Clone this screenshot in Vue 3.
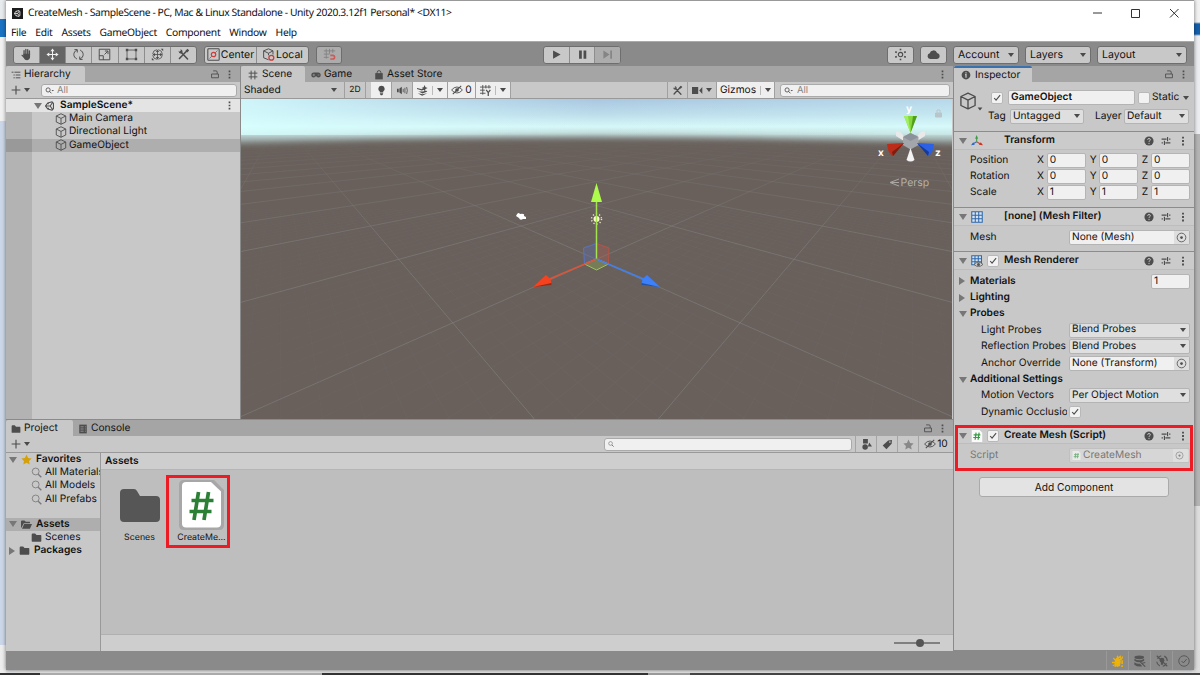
<template>
  <div class="desktop">
    <!-- shared icon shapes -->
    <svg class="defs">
      <symbol id="i-hand" viewBox="0 0 16 16"><path d="M5 9V3.2M7.2 8V1.8M9.5 8V2M11.6 9V3.6" stroke="currentColor" stroke-width="1.6" stroke-linecap="round" /><path d="M4.2 7h8.2v3.5c0 2.500-1.200 4.500-3.600 4.500-2.200 0-3-.8-4.100-2.700L1.600 8.800c.6-1 1.700-.7 2.600.6z" fill="currentColor" /></symbol>
      <symbol id="i-move" viewBox="0 0 16 16"><path d="M8 3v10M3 8h10" stroke="currentColor" stroke-width="1.300" /><path d="M8 .5l2.500 3.500h-5zM8 15.500l2.500-3.500h-5zM.5 8L4 5.500v5zM15.500 8L12 5.500v5z" fill="currentColor" /></symbol>
      <symbol id="i-rotate" viewBox="0 0 16 16"><g fill="none" stroke="currentColor" stroke-width="1.200"><path d="M6 13.500C1 11 1 5 6 2.500M3 2h3.500v3.500M10 2.500c5 2.500 5 8.500 0 11M13 14H9.500v-3.500" /></g></symbol>
      <symbol id="i-scale" viewBox="0 0 16 16"><g fill="none" stroke="currentColor" stroke-width="1.200"><path d="M1.500 1.500h13v13h-13zM1.500 9.500h5v5M8 8l4-4M8.500 3.700h3.800v3.800" /></g></symbol>
      <symbol id="i-rect" viewBox="0 0 16 16"><path d="M2.500 2.500h11v11h-11z" fill="none" stroke="currentColor" /><path d="M1 1h3v3H1zM12 1h3v3h-3zM1 12h3v3H1zM12 12h3v3h-3z" fill="currentColor" /></symbol>
      <symbol id="i-trs" viewBox="0 0 16 16"><circle cx="8" cy="8" r="6" fill="none" stroke="currentColor" stroke-dasharray="8 1.500" /><path d="M8 3v10M3 8h10" stroke="currentColor" /><path d="M8 2l2 3H6zM8 14l2-3H6zM2 8l3-2v4zM14 8l-3-2v4zM12 1h3v3zM1 12v3h3z" fill="currentColor" /></symbol>
      <symbol id="i-tools" viewBox="0 0 16 16"><path d="M4.500 4.500l8.500 9M12.500 3L3 13" stroke="currentColor" stroke-width="1.900" stroke-linecap="round" /><path d="M2 3.500c0 3 2 4 4.500 2.500C7.500 3.500 6 1.500 4 1.800L5 4 3.800 4.800zM10.500 3.500L13 1l2 2-2.500 2.500z" fill="currentColor" /></symbol>
      <symbol id="i-center" viewBox="0 0 16 16"><rect x="1" y="1" width="14" height="14" rx="1" fill="none" stroke="currentColor" stroke-width="1.300" /><circle cx="8" cy="8" r="2.700" fill="none" stroke="#cc3d3d" stroke-width="1.500" /><path d="M10 6l3-3M6 10l-3 3" stroke="#cc3d3d" /></symbol>
      <symbol id="i-cube" viewBox="0 0 16 16"><path d="M8 1l6.300 3v8L8 15 1.700 12V4zM1.700 4L8 7.200 14.300 4M8 7.200V15" fill="none" stroke="currentColor" stroke-width="1.200" stroke-linejoin="round" /></symbol>
      <symbol id="i-local" viewBox="0 0 16 16"><path d="M8 1l5.500 2.500V8M8 14.500L2 12V3.500L8 1M2 3.500L8 6.500l5.500-3M8 6.500V9" fill="none" stroke="currentColor" stroke-width="1.200" /><circle cx="11.500" cy="12" r="3" fill="none" stroke="#cc3d3d" stroke-width="1.600" /></symbol>
      <symbol id="i-snap" viewBox="0 0 16 16"><path d="M4 1v12M8 1v6M12 1v5M1 3.500h14M1 7.500h7M1 11.500h6" stroke="currentColor" stroke-width="1.200" /><path d="M9 9h3a2 2 0 010 4.500H9" fill="none" stroke="#cc5b5b" stroke-width="2" /></symbol>
      <symbol id="i-play" viewBox="0 0 16 16"><path d="M3 2l11 6-11 6z" fill="currentColor" /></symbol>
      <symbol id="i-pause" viewBox="0 0 16 16"><path d="M3 2h4v12H3zM9.500 2h4v12h-4z" fill="currentColor" /></symbol>
      <symbol id="i-step" viewBox="0 0 16 16"><path d="M2 2l9 6-9 6zM12 2h2.500v12H12z" fill="currentColor" /></symbol>
      <symbol id="i-collab" viewBox="0 0 16 16"><circle cx="8" cy="8" r="2.700" fill="none" stroke="currentColor" stroke-width="1.400" /><path d="M8 .8v2M8 13.200v2M1.500 4.500l2 1M14.500 4.500l-2 1M1.500 11.500l2-1M14.500 11.500l-2-1" stroke="currentColor" stroke-width="2" /></symbol>
      <symbol id="i-cloud" viewBox="0 0 16 16"><path d="M4 13.500a3.500 3.500 0 01-.6-6.900 4.700 4.700 0 019-.6A3.800 3.800 0 0112.500 13.500z" fill="currentColor" /></symbol>
      <symbol id="i-hier" viewBox="0 0 16 16"><path d="M1 3.500h3M5.500 3.500H15M4 8h2M7.500 8H15M4 12.500h2M7.500 12.500H15" stroke="currentColor" stroke-width="1.500" /></symbol>
      <symbol id="i-lock" viewBox="0 0 16 16"><path d="M2.500 8h11v6h-11zM5 3h4.500q2 0 2 2v3" fill="none" stroke="currentColor" stroke-width="1.400" /></symbol>
      <symbol id="i-dots" viewBox="0 0 16 16"><path d="M6.500 1h3v3h-3zM6.500 6.500h3v3h-3zM6.500 12h3v3h-3z" fill="currentColor" /></symbol>
      <symbol id="i-plus" viewBox="0 0 16 16"><path d="M8 1v14M1 8h14" stroke="currentColor" stroke-width="1.800" /></symbol>
      <symbol id="i-find" viewBox="0 0 16 16"><circle cx="5.500" cy="7" r="3.700" fill="none" stroke="currentColor" stroke-width="1.500" /><path d="M8 9.500l3.500 3.500" stroke="currentColor" stroke-width="1.600" /><path d="M11.500 7H16l-2.200 2.500z" fill="currentColor" /></symbol>
      <symbol id="i-lens" viewBox="0 0 16 16"><circle cx="6.800" cy="6.500" r="5" fill="none" stroke="currentColor" stroke-width="1.200" /><path d="M10.500 10.500l4.500 4.500" stroke="currentColor" stroke-width="1.900" /></symbol>
      <symbol id="i-unity" viewBox="0 0 16 16"><path d="M11.500 1.200L4.500 3 .8 8l3.700 5 7 1.800M11.500 1.200L13.500 4v8l-2 2.800M.8 8h7.500M8.300 8l4-6M8.300 8l4 6M4.500 3l1.300 2M4.500 13l1.300-2" fill="none" stroke="currentColor" stroke-width="1.700" /></symbol>
      <symbol id="i-hash" viewBox="0 0 16 16"><path d="M5 1v14M11 1v14M1 5h14M1 11h14" stroke="currentColor" stroke-width="1.500" /></symbol>
      <symbol id="i-pad" viewBox="0 0 16 16"><path d="M4.500 4h7a4 4 0 010 8q-1.500 0-2-1.500h-3Q6 12 4.500 12a4 4 0 010-8z" fill="currentColor" /><path d="M4.500 6v4M2.500 8h4M10.500 8h3" stroke="#a5a5a5" /></symbol>
      <symbol id="i-bag" viewBox="0 0 16 16"><path d="M2 5h12v10H2z" fill="currentColor" /><path d="M5 6V4a3 3 0 016 0v2" fill="none" stroke="currentColor" stroke-width="1.500" /></symbol>
      <symbol id="i-bulb" viewBox="0 0 16 16"><path d="M8 1a4.600 4.600 0 00-2.500 8.500V11h5V9.500A4.600 4.600 0 008 1zM5.700 12h4.600v1L9 15H7l-1.300-2z" fill="currentColor" /></symbol>
      <symbol id="i-audio" viewBox="0 0 16 16"><path d="M0 5.500h2.500v5H0zM3.500 5L7 2.500v11L3.500 11z" fill="currentColor" /><path d="M9 5.500v5M11.500 4v8M14 3q2 5 0 10" stroke="currentColor" stroke-width="1.200" fill="none" /></symbol>
      <symbol id="i-fx" viewBox="0 0 16 16"><path d="M0 8l3 1.500h6L13 8l2 1.500-7 3zM1 12l6.500 3.500L15 12l-7 1.500z" fill="currentColor" /><path d="M0 5l7 2 3-1" stroke="currentColor" stroke-width="1.600" fill="none" /><path d="M11 0l1.400 3.100L15.500 4.500l-3.100 1.400L11 9 9.600 5.900 6.500 4.500l3.100-1.400z" fill="currentColor" /></symbol>
      <symbol id="i-eyeoff" viewBox="0 0 20 16"><path d="M1 8q4-5 9-5t9 5q-4 5-9 5T1 8z" fill="none" stroke="currentColor" stroke-width="1.500" /><circle cx="10" cy="8" r="3" fill="currentColor" /><path d="M3 15L17 1" stroke="currentColor" stroke-width="1.700" /></symbol>
      <symbol id="i-grid" viewBox="0 0 16 16"><path d="M4 0v14M8.500 0v5M13 0v5M0 3h16M0 7.500h7M0 12h8" stroke="currentColor" stroke-width="1.300" /><path d="M9 7l3 4 3-4M12 11v5" fill="none" stroke="currentColor" stroke-width="1.800" /></symbol>
      <symbol id="i-cam" viewBox="0 0 16 16"><path d="M0 3h9v10H0zM10.500 8L15 3v10z" fill="currentColor" /></symbol>
      <symbol id="i-info" viewBox="0 0 16 16"><circle cx="8" cy="8" r="7" fill="currentColor" /><path d="M8 3.500v2M6.500 7.500H8v5" stroke="#c8c8c8" stroke-width="2" fill="none" /></symbol>
      <symbol id="i-help" viewBox="0 0 16 16"><circle cx="8" cy="8" r="7.300" fill="currentColor" /><path d="M5.800 6q0-2 2.200-2t2.200 2q0 1-1.200 1.700T8 9.500M8 11v2" stroke="#cbcbcb" stroke-width="1.500" fill="none" /></symbol>
      <symbol id="i-preset" viewBox="0 0 16 16"><path d="M1 5h8M13 5h2M1 11h2M7 11h8M10.500 1.500v7M5.500 7.500v7" stroke="currentColor" stroke-width="1.800" /></symbol>
      <symbol id="i-axes" viewBox="0 0 16 16"><path d="M7.500 9V4" stroke="#4a9b52" stroke-width="1.500" /><path d="M5.500 5l2-5 2 5z" fill="#3b9b45" /><path d="M7.500 9l-5 3" stroke="#3770c8" stroke-width="1.500" /><path d="M0 13.500l3-4 2 3.500z" fill="#2a67c5" /><path d="M7.500 9l5 3" stroke="#c84b3c" stroke-width="1.500" /><path d="M16 13.500l-3-4-2.500 3.500z" fill="#d62d1e" /></symbol>
      <symbol id="i-mesh" viewBox="0 0 16 16"><path d="M1 1h14v14H1zM5.700 1v14M10.300 1v14M1 5.700h14M1 10.300h14" fill="#dbe4ee" stroke="#2c68ad" stroke-width="1.400" /></symbol>
      <symbol id="i-renderer" viewBox="0 0 16 16"><path d="M1 1h13v12H1zM5.300 1v12M9.700 1v12M1 5h13M1 9h13" fill="#dbe4ee" stroke="#2c68ad" stroke-width="1.400" /><path d="M4 12.500q6-6 12 0-6 6-12 0z" fill="#c8c8c8" stroke="#555" /><circle cx="10" cy="12.500" r="2" fill="#555" /></symbol>
      <symbol id="i-folder" viewBox="0 0 16 16"><path d="M1 3.500Q1 2 2.500 2H6l2 2.500h6q1 0 1 1v7.500q0 1-1 1H2q-1 0-1-1z" fill="currentColor" /></symbol>
      <symbol id="i-open" viewBox="0 0 16 16"><path d="M0 13V3.500Q0 2 1.500 2H5l2 2h6v2H4L1 12z" fill="currentColor" /><path d="M4.500 7.200H16L13 14H1.500z" fill="currentColor" /></symbol>
      <symbol id="i-console" viewBox="0 0 16 16"><path d="M2 1h12v14H2z" fill="currentColor" /><path d="M4 4.500h5M11 4.500h1.500M4 8h5M11 8h1.500M4 11.500h5M11 11.500h1.500" stroke="#a5a5a5" stroke-width="1.200" /></symbol>
      <symbol id="i-star" viewBox="0 0 16 16"><path d="M8 .8l2.300 4.900 5.200.7-3.800 3.700.9 5.300L8 12.800l-4.600 2.600.9-5.300L.5 6.400l5.200-.7z" fill="currentColor" /></symbol>
      <symbol id="i-shapes" viewBox="0 0 16 16"><path d="M3 0h7v6.500H3zM12 5l4 6h-6z" fill="currentColor" /><circle cx="6" cy="11.500" r="4" fill="currentColor" /></symbol>
      <symbol id="i-tag" viewBox="0 0 16 16"><path d="M1 9.500L9 2l5.500-.5L14 7l-7.500 8z" fill="currentColor" /><circle cx="11.500" cy="4.500" r="1.200" fill="#c8c8c8" /></symbol>
      <symbol id="i-bug" viewBox="0 0 16 16"><path d="M5 6l2-2 3 2 1 3-1 5-3 1-3-3z" fill="currentColor" stroke="currentColor" stroke-width="1.500" /><path d="M7 1l1 3 3-2v3M2 4l2 3M0 10h4M1 14l3-1M5 13l-1 3M14 2l-1 3-3 2" stroke="currentColor" stroke-width="1.700" fill="none" /><path d="M13.500 7v5M13.500 13.500V16" stroke="currentColor" stroke-width="2" /></symbol>
      <symbol id="i-stack" viewBox="0 0 16 16"><ellipse cx="7" cy="3" rx="6.500" ry="2.500" fill="currentColor" /><path d="M.5 5q6.500 4 13 0v2.500q-6.500 4-13 0zM.5 9.500Q4 12 8 11.500l3 3.500q-6 1.500-10.500-2z" fill="currentColor" /><path d="M8.500 9.500l6.500 6M15 10l-4 1" stroke="currentColor" stroke-width="1.600" /></symbol>
      <symbol id="i-nolight" viewBox="0 0 16 16"><path d="M2 5a7 7 0 015-4M11 1.500A7 7 0 0115 8M14 11a7 7 0 01-5 4M5 14.500A7 7 0 011 9" fill="none" stroke="currentColor" stroke-width="1.500" /><circle cx="8" cy="7" r="3.200" fill="currentColor" /><path d="M6.500 9h3v4h-3z" fill="currentColor" /><path d="M1 1l14 14" stroke="currentColor" stroke-width="1.500" /></symbol>
      <symbol id="i-ok" viewBox="0 0 16 16"><circle cx="8" cy="8" r="7" fill="none" stroke="currentColor" stroke-width="1.200" /><path d="M4.800 8l2.400 2.500L11.500 5.500" fill="none" stroke="currentColor" stroke-width="1.300" /></symbol>
      <symbol id="i-target" viewBox="0 0 16 16"><circle cx="8" cy="8" r="6.300" fill="none" stroke="currentColor" stroke-width="1.200" /><circle cx="8" cy="8" r="2" fill="currentColor" /></symbol>
      <symbol id="i-check" viewBox="0 0 16 16"><path d="M3.500 8l3 3.500 6.500-8" fill="none" stroke="currentColor" stroke-width="1.800" /></symbol>
      <symbol id="i-script" viewBox="0 0 16 16"><path d="M1 0h10.500L15 3.500V16H1z" fill="#fafafa" /><path d="M6.800 3.500L5.500 13M10.800 3.500L9.500 13M3.500 6.500h9M3 10h9" stroke="#379944" stroke-width="1.600" /></symbol>
    </svg>

    <!-- windows behind the editor -->
    <div class="behind-left"></div>
    <div class="behind-right"></div>

    <div class="window">
      <div class="titlebar">
        <span class="app-logo"><svg class="icon"><use href="#i-unity" /></svg></span>
        <span class="title">CreateMesh - SampleScene - PC, Mac &amp; Linux Standalone - Unity 2020.3.12f1 Personal* &lt;DX11&gt;</span>
        <svg class="win-btns" viewBox="0 0 90 12">
          <path d="M1 6h9M39.500 2.500h8v8h-8zM78 2l8.500 8.500M86.500 2L78 10.500" fill="none" stroke="#333" />
        </svg>
      </div>
      <nav class="menubar">
        <span v-for="m in menus" :key="m">{{ m }}</span>
      </nav>

      <!-- main toolbar -->
      <div class="toolbar">
        <div class="btn-group tools">
          <span v-for="t in tools" :key="t" class="btn" :class="{ active: t === 'move' }">
            <svg class="icon"><use :href="'#i-' + t" /></svg>
          </span>
        </div>
        <div class="btn-group pivot">
          <span class="btn"><svg class="icon"><use href="#i-center" /></svg>Center</span>
          <span class="btn"><svg class="icon"><use href="#i-local" /></svg>Local</span>
        </div>
        <div class="btn-group snap"><span class="btn dim"><svg class="icon"><use href="#i-snap" /></svg></span></div>
        <div class="btn-group playback">
          <span class="btn"><svg class="icon"><use href="#i-play" /></svg></span>
          <span class="btn"><svg class="icon"><use href="#i-pause" /></svg></span>
          <span class="btn dim"><svg class="icon"><use href="#i-step" /></svg></span>
        </div>
        <div class="btn-group collab"><span class="btn"><svg class="icon"><use href="#i-collab" /></svg></span></div>
        <div class="btn-group cloud"><span class="btn"><svg class="icon"><use href="#i-cloud" /></svg></span></div>
        <div class="btn-group drop">Account<i class="caret"></i></div>
        <div class="btn-group drop">Layers<i class="caret"></i></div>
        <div class="btn-group drop wide">Layout<i class="caret"></i></div>
      </div>

      <div class="main">
        <div class="left">
          <div class="upper">
            <!-- hierarchy -->
            <section class="panel hierarchy">
              <div class="tabs">
                <span class="tab on"><svg class="icon"><use href="#i-hier" /></svg>Hierarchy</span>
                <svg class="icon lock"><use href="#i-lock" /></svg>
                <svg class="icon dots"><use href="#i-dots" /></svg>
              </div>
              <div class="bar">
                <svg class="icon plus"><use href="#i-plus" /></svg><i class="caret"></i>
                <div class="search"><svg class="icon"><use href="#i-find" /></svg>All</div>
              </div>
              <div class="tree">
                <div class="node scene-node">
                  <i class="fold"></i><svg class="icon"><use href="#i-unity" /></svg><b>SampleScene*</b>
                  <svg class="icon dots"><use href="#i-dots" /></svg>
                </div>
                <div v-for="o in objects" :key="o" class="node" :class="{ picked: o === 'GameObject' }">
                  <svg class="icon"><use href="#i-cube" /></svg>{{ o }}
                </div>
              </div>
            </section>

            <!-- scene view -->
            <section class="panel scene">
              <div class="tabs">
                <span class="tab on scene-tab"><svg class="icon"><use href="#i-hash" /></svg>Scene</span>
                <span class="tab game-tab"><svg class="icon"><use href="#i-pad" /></svg>Game</span>
                <span class="tab"><svg class="icon"><use href="#i-bag" /></svg>Asset Store</span>
                <svg class="icon dots"><use href="#i-dots" /></svg>
              </div>
              <div class="bar scene-bar">
                <span class="shade">Shaded<i class="caret"></i></span>
                <span class="cell two-d">2D</span>
                <span class="cell lit bulb"><svg class="icon"><use href="#i-bulb" /></svg></span>
                <span class="cell audio"><svg class="icon"><use href="#i-audio" /></svg></span>
                <span class="cell lit fx"><svg class="icon"><use href="#i-fx" /></svg><i class="sep"></i><i class="caret"></i></span>
                <span class="cell lit hidden"><svg class="icon eye"><use href="#i-eyeoff" /></svg>0</span>
                <span class="cell lit gridcell"><svg class="icon"><use href="#i-grid" /></svg><i class="sep"></i><i class="caret"></i></span>
                <span class="cell wrench"><svg class="icon"><use href="#i-tools" /></svg></span>
                <span class="cell camera"><svg class="icon"><use href="#i-cam" /></svg><i class="caret"></i></span>
                <span class="cell lit gizmos">Gizmos<i class="sep"></i><i class="caret"></i></span>
                <div class="search"><svg class="icon"><use href="#i-find" /></svg>All</div>
              </div>
              <svg class="viewport" width="711" height="320" viewBox="1 0 711 320">
                <defs>
                  <linearGradient id="sky" x1="0" y1="0" x2="0" y2="1">
                    <stop offset="0" stop-color="#a9c7e1" />
                    <stop offset=".25" stop-color="#bcdcea" />
                    <stop offset=".46" stop-color="#d6f7f8" />
                    <stop offset=".58" stop-color="#c3dedd" />
                    <stop offset=".72" stop-color="#939d9b" />
                    <stop offset=".86" stop-color="#69615c" />
                  </linearGradient>
                  <linearGradient id="glow" x1="0" y1="0" x2="1" y2="0">
                    <stop offset="0" stop-color="#d8ffff" stop-opacity=".8" />
                    <stop offset=".5" stop-color="#d8ffff" stop-opacity="0" />
                    <stop offset="1" stop-color="#d8ffff" stop-opacity=".3" />
                  </linearGradient>
                  <linearGradient id="fade" gradientUnits="userSpaceOnUse" x1="0" y1="42" x2="0" y2="150">
                    <stop offset="0" stop-color="#fff" stop-opacity="0" />
                    <stop offset=".3" stop-color="#fff" stop-opacity=".4" />
                    <stop offset="1" stop-color="#fff" />
                  </linearGradient>
                  <radialGradient id="near" gradientUnits="userSpaceOnUse" cx="356" cy="330" r="360">
                    <stop offset="0" stop-color="#fff" />
                    <stop offset="1" stop-color="#fff" stop-opacity=".4" />
                  </radialGradient>
                  <filter id="soft" x="-10%" y="-10%" width="120%" height="120%"><feGaussianBlur stdDeviation="3.500" /></filter>
                  <mask id="far-mask"><rect width="712" height="320" fill="url(#fade)" /></mask>
                  <mask id="near-mask"><rect y="100" width="712" height="220" fill="url(#near)" /></mask>
                </defs>
                <rect width="712" height="60" fill="url(#sky)" />
                <rect width="712" height="36" fill="url(#glow)" />
                <path d="M-40 48Q356 30 750 48V400H-40z" fill="#69615c" filter="url(#soft)" />
                <g mask="url(#near-mask)"><path :d="minorGrid" class="minor" /></g>
                <g mask="url(#far-mask)"><path :d="majorGrid" class="major" /></g>

                <!-- camera and light gizmos -->
                <path d="M276 117q2-5 4-2 5-1 4 2l2 1v2h-3q-3 2-4-1z" fill="#fff" />
                <circle cx="356.500" cy="120" r="5" fill="none" stroke="#e8e3c4" stroke-width="1.500" stroke-dasharray="1.200 2" />
                <circle cx="356.500" cy="120" r="3" fill="#fdf7cc" />

                <!-- move handle -->
                <path d="M343.500 149l13-4.500v15.500l-12 5z" fill="#5c6fb3" fill-opacity=".35" stroke="#5674c4" />
                <path d="M356.500 144.500l12.500 4.500-.5 16-12-5z" fill="#b35c52" fill-opacity=".35" stroke="#b95344" />
                <path d="M344.500 165l12-5 12 5-12 6z" fill="#89a852" fill-opacity=".4" stroke="#9bc256" />
                <path d="M356.500 160V100" stroke="#a4e34f" stroke-width="1.500" />
                <path d="M356.500 84l5.500 19h-11z" fill="#adfb4a" />
                <path d="M356.500 160l-47 20" stroke="#d9563c" stroke-width="1.500" />
                <path d="M293 188l13-12 4.500 4 1 6z" fill="#f8421f" />
                <path d="M293 188l18.500-4v2z" fill="#8d2c1c" />
                <path d="M356.500 160l47 20" stroke="#4480ea" stroke-width="1.500" />
                <path d="M420 188l-13-12-4.500 4-1 6z" fill="#3d80fb" />
                <path d="M420 188l-18.500-4v2z" fill="#24509c" />

                <!-- orientation gizmo -->
                <g>
                  <path d="M656 33q3-2 6 2l6 6-4 1-8-5zM685 33q-3-2-6 2l-6 6 4 1 8-5z" fill="#e9e9e9" />
                  <path d="M663 38l7.500-4 8 4v8l-8 4.500-7.500-4.500z" fill="#a3a7ac" />
                  <path d="M663 38l7.500-4 8 4-8 4z" fill="#8b9299" />
                  <path d="M664 17h13l-6.500 17z" fill="#84d83b" /><path d="M664 17h4l2.500 17z" fill="#a4ef61" /><path d="M673 17h4l-6.500 17z" fill="#519d1e" />
                  <path d="M647 45l17-1-11 13q-5-2-6-12z" fill="#bd2c18" /><path d="M664 44l-11 13-1-4z" fill="#7e1d10" />
                  <path d="M694 45l-17-1 11 13q5-2 6-12z" fill="#2c61e4" /><path d="M677 44l11 13 1-4z" fill="#163a99" />
                  <path d="M670.500 49l4 12q-4 3-8 0z" fill="#f3f3f3" />
                </g>
                <g class="gizmo-text">
                  <text x="666" y="13">y</text><text x="638" y="57">x</text><text x="695" y="57">z</text>
                </g>
                <g stroke="#b9c6c9" fill="none"><path d="M695.500 14h6v4h-6z" fill="#b9c6c9" /><path d="M697 14v-3h3v3" /></g>
                <path d="M659 80l-9 3.500 9 3.500M659 83.500h-8" fill="none" stroke="#aaa7a3" />
                <text x="660.500" y="87" class="persp">Persp</text>
              </svg>
            </section>
          </div>

          <!-- project -->
          <section class="panel project">
            <div class="tabs">
              <span class="tab on project-tab"><svg class="icon"><use href="#i-folder" /></svg>Project</span>
              <span class="tab"><svg class="icon"><use href="#i-console" /></svg>Console</span>
              <svg class="icon lock"><use href="#i-lock" /></svg>
              <svg class="icon dots"><use href="#i-dots" /></svg>
            </div>
            <div class="bar project-bar">
              <svg class="icon plus"><use href="#i-plus" /></svg><i class="caret"></i>
              <div class="search"><svg class="icon"><use href="#i-lens" /></svg></div>
              <span class="cell"><svg class="icon"><use href="#i-shapes" /></svg></span>
              <span class="cell"><svg class="icon"><use href="#i-tag" /></svg></span>
              <span class="cell fav"><svg class="icon"><use href="#i-star" /></svg></span>
              <span class="cell count"><svg class="icon eye"><use href="#i-eyeoff" /></svg>10</span>
            </div>
            <div class="browser">
              <div class="folders">
                <div class="node root"><i class="fold"></i><svg class="icon gold"><use href="#i-star" /></svg><b>Favorites</b></div>
                <div v-for="f in filters" :key="f" class="node child"><svg class="icon lens"><use href="#i-lens" /></svg>{{ f }}</div>
                <div class="node root picked"><i class="fold"></i><svg class="icon"><use href="#i-open" /></svg><b>Assets</b></div>
                <div class="node child"><svg class="icon"><use href="#i-folder" /></svg>Scenes</div>
                <div class="node root"><i class="fold closed"></i><svg class="icon"><use href="#i-folder" /></svg><b>Packages</b></div>
              </div>
              <div class="files">
                <div class="crumb">Assets</div>
                <div class="tiles">
                  <div class="tile">
                    <svg class="thumb" viewBox="0 0 50 50"><path d="M5 13q0-4 4-4h10q2 0 3 2l3 5h16q4 0 4 4v18q0 4-4 4H9q-4 0-4-4z" fill="#565656" /></svg>
                    <span>Scenes</span>
                  </div>
                  <div class="tile marked">
                    <svg class="thumb" viewBox="0 0 50 50">
                      <path d="M7 0h30l10 10v35q0 5-5 5H7q-5 0-5-5V5q0-5 5-5z" fill="#a7a7a7" />
                      <path d="M9 2h25l10 9.500v32q0 4-4 4H9q-4 0-4-4V6q0-4 4-4z" fill="#fff" />
                      <path d="M21.500 12l-4.500 28M31.500 12L27 40M14.500 20.500h22M12.500 31.500h22" stroke="#2c8036" stroke-width="3.700" />
                    </svg>
                    <span>CreateMe...</span>
                  </div>
                </div>
                <div class="zoombar"><i class="track"><i class="knob"></i></i></div>
              </div>
            </div>
          </section>
        </div>

        <!-- inspector -->
        <section class="panel inspector">
          <div class="tabs">
            <span class="tab on focus"><svg class="icon"><use href="#i-info" /></svg>Inspector</span>
            <svg class="icon lock"><use href="#i-lock" /></svg>
            <svg class="icon dots"><use href="#i-dots" /></svg>
          </div>
          <div class="object-head">
            <div class="big-cube"><svg class="icon"><use href="#i-cube" /></svg><i class="caret"></i></div>
            <div class="head-rows">
              <div class="head-row">
                <span class="box"><svg class="icon"><use href="#i-check" /></svg></span>
                <span class="field name">GameObject</span>
                <span class="box empty"></span>
                <span class="static">Static</span><i class="caret"></i>
              </div>
              <div class="head-row second">
                <span class="tag">Tag</span><span class="select tag-sel">Untagged<i class="caret"></i></span>
                <span class="layer">Layer</span><span class="select layer-sel">Default<i class="caret"></i></span>
              </div>
            </div>
          </div>

          <div v-for="c in components" :key="c.title" class="component" :class="c.cls">
            <header>
              <i class="fold"></i>
              <svg class="icon type"><use :href="'#i-' + c.icon" /></svg>
              <span class="box" :class="{ none: !c.toggle }"><svg class="icon"><use href="#i-check" /></svg></span>
              <b>{{ c.title }}</b>
              <svg class="icon"><use href="#i-help" /></svg>
              <svg class="icon"><use href="#i-preset" /></svg>
              <svg class="icon dots"><use href="#i-dots" /></svg>
            </header>
            <div v-for="r in c.rows" :key="r.label" class="row" :class="['row-' + r.kind, { sub: r.sub }]">
              <i v-if="r.kind === 'group'" class="fold" :class="{ closed: !r.open }"></i>
              <span class="label">{{ r.label }}</span>
              <template v-if="r.kind === 'vector'">
                <span v-for="(v, i) in r.value" :key="i" class="axis">{{ 'XYZ'[i] }}<span class="field">{{ v }}</span></span>
              </template>
              <span v-else-if="r.kind === 'select'" class="select">{{ r.value }}<i class="caret"></i></span>
              <span v-else-if="r.kind === 'object'" class="field ref">
                <svg v-if="r.icon" class="icon"><use href="#i-script" /></svg>{{ r.value }}
                <em><svg class="icon"><use href="#i-target" /></svg></em>
              </span>
              <span v-else-if="r.kind === 'check'" class="box"><svg class="icon"><use href="#i-check" /></svg></span>
              <span v-else-if="r.value" class="field size">{{ r.value }}</span>
            </div>
          </div>
          <button class="add">Add Component</button>
        </section>
      </div>

      <footer class="status">
        <span class="warn"><svg class="icon"><use href="#i-bug" /></svg></span>
        <span><svg class="icon"><use href="#i-stack" /></svg></span>
        <span><svg class="icon"><use href="#i-nolight" /></svg></span>
        <span><svg class="icon"><use href="#i-ok" /></svg></span>
      </footer>
    </div>
    <div class="taskbar"></div>
  </div>
</template>

<script setup>
const menus = ['File', 'Edit', 'Assets', 'GameObject', 'Component', 'Window', 'Help']
const tools = ['hand', 'move', 'rotate', 'scale', 'rect', 'trs', 'tools']
const objects = ['Main Camera', 'Directional Light', 'GameObject']
const filters = ['All Materials', 'All Models', 'All Prefabs']

const components = [
  {
    title: 'Transform', icon: 'axes', cls: 'transform',
    rows: [
      { label: 'Position', kind: 'vector', value: [0, 0, 0] },
      { label: 'Rotation', kind: 'vector', value: [0, 0, 0] },
      { label: 'Scale', kind: 'vector', value: [1, 1, 1] },
    ],
  },
  {
    title: '[none] (Mesh Filter)', icon: 'mesh', cls: 'filter',
    rows: [{ label: 'Mesh', kind: 'object', value: 'None (Mesh)' }],
  },
  {
    title: 'Mesh Renderer', icon: 'renderer', toggle: true, cls: 'renderer',
    rows: [
      { label: 'Materials', kind: 'group', value: '1' },
      { label: 'Lighting', kind: 'group' },
      { label: 'Probes', kind: 'group', open: true },
      { label: 'Light Probes', kind: 'select', sub: true, value: 'Blend Probes' },
      { label: 'Reflection Probes', kind: 'select', sub: true, value: 'Blend Probes' },
      { label: 'Anchor Override', kind: 'object', sub: true, value: 'None (Transform)' },
      { label: 'Additional Settings', kind: 'group', open: true },
      { label: 'Motion Vectors', kind: 'select', sub: true, value: 'Per Object Motion' },
      { label: 'Dynamic Occlusion', kind: 'check', sub: true },
    ],
  },
  {
    title: 'Create Mesh (Script)', icon: 'script', toggle: true, cls: 'script',
    rows: [{ label: 'Script', kind: 'object', value: 'CreateMesh', icon: true }],
  },
]

// ground point -> viewport point, camera looks along the x/z diagonal
const project = (x, z) => {
  const w = 3.202 + x + z
  return `${(356.4 + (316.4 * (x - z)) / w).toFixed(1)} ${(20.4 + 448 / w).toFixed(1)}`
}

const gridPath = (from, to, step, far) => {
  let d = ''
  for (let i = from; i <= to; i += step) {
    const start = 0.6 - 3.202 - i
    const end = far - 3.202 - i
    d += `M${project(i, start)}L${project(i, end)}M${project(start, i)}L${project(end, i)}`
  }
  return d
}

const majorGrid = gridPath(-14, 24, 1, 40)
const minorGrid = gridPath(-4, 4, 0.1, 5)
</script>

<style>
body {
  margin: 0;
  overflow: hidden;
}
</style>

<style scoped>
* {
  box-sizing: border-box;
}

.desktop {
  position: relative;
  width: 1200px;
  height: 675px;
  padding: 0 6px;
  overflow: hidden;
  background: #e4e5e7;
  font: 10.200px/13px Inter, "Liberation Sans", sans-serif;
  text-rendering: geometricPrecision;
  color: #111;
}

.defs {
  display: none;
}

/* slivers of other windows around the editor */
.behind-left,
.behind-right {
  position: absolute;
  top: 0;
  width: 6px;
  height: 675px;
}

.behind-left {
  left: 0;
  background: linear-gradient(#e9ecef 19px, #1a73c4 19px 37px, #f2f2f2 37px 121px, #ccd8e9 121px 645px, #eee 645px);
}

.behind-right {
  right: 0;
  background: linear-gradient(#f2f2f2 22px, #1460ad 24px 34px, #eceef2 36px 134px, #b5b5b5 134px 506px, #dedede 506px);
}

.taskbar {
  position: absolute;
  left: 0;
  bottom: 0;
  width: 1200px;
  height: 2px;
  background: linear-gradient(90deg, #333 40px, #aaa 40px 322px, #333 322px 648px, #999 648px 690px, #444 690px);
}

.window {
  position: relative;
  width: 1188px;
  height: 670px;
  display: flex;
  flex-direction: column;
  border-top: 1px solid #999;
  background: #8a8a8a;
  box-shadow: 0 0 4px rgba(0, 0, 0, .55);
}

.icon {
  width: 11px;
  height: 11px;
  flex: none;
  color: #4d4d4d;
  fill: none;
}

.caret {
  flex: none;
  border: 3.500px solid transparent;
  border-top: 4px solid #4a4a4a;
  border-bottom: 0;
}

/* title and menu */
.titlebar {
  height: 24px;
  display: flex;
  align-items: center;
  padding-left: 6px;
  background: #fff;
  font: 10.300px "Noto Sans", sans-serif;
}

.app-logo {
  display: flex;
  padding: 2px;
  margin-right: 5px;
  background: #1c1c1c;
}

.app-logo .icon {
  width: 7px;
  height: 7px;
  color: #fff;
}

.title {
  letter-spacing: -.38px;
}

.win-btns {
  width: 90px;
  height: 12px;
  margin: 0 12px 0 auto;
}

.menubar {
  height: 16px;
  display: flex;
  align-items: center;
  gap: 9px;
  padding-left: 5px;
  background: #fff;
  font: 10.300px/16px "Noto Sans", sans-serif;
  letter-spacing: -.3px;
}

/* main toolbar */
.toolbar {
  height: 25px;
  display: flex;
  align-items: center;
  padding: 1px 0 0 7px;
  border-top: 1px solid #aaa;
}

.btn-group {
  flex: none;
  display: flex;
  height: 18px;
  border: 1px solid #6e6e6e;
  border-radius: 3px;
  background: #c8c8c8;
  overflow: hidden;
}

.btn {
  flex: 1;
  display: flex;
  align-items: center;
  justify-content: center;
  font-size: 10.500px;
}

.btn + .btn {
  border-left: 1px solid #8d8d8d;
}

.btn .icon {
  width: 13px;
  height: 13px;
}

.btn.active {
  background: #656565;
}

.btn.active .icon {
  color: #f0f0f0;
}

.btn.dim {
  background: #acacac;
}

.btn.dim .icon {
  color: #858585;
}

.tools {
  width: 184px;
}

.pivot {
  width: 105px;
  margin-left: 7px;
}

.pivot .icon {
  margin-right: 1px;
}

.snap {
  width: 26px;
  margin-left: 7px;
}

.playback {
  width: 78px;
  margin: 0 266px 0 201px;
}

.playback .icon {
  width: 11px;
  height: 11px;
}

.collab,
.cloud {
  width: 27px;
}

.cloud {
  margin: 0 6px;
}

.drop {
  width: 66px;
  align-items: center;
  justify-content: space-between;
  padding: 0 4px;
  margin-right: 6px;
  font-size: 10.500px;
}

.drop.wide {
  width: 90px;
  margin-right: 0;
}

/* panels */
.main {
  height: 585px;
  display: flex;
  gap: 1px;
}

.left {
  width: 947px;
}

.upper {
  display: flex;
  gap: 1px;
  height: 353px;
}

.panel {
  display: flex;
  flex-direction: column;
  background: #c8c8c8;
  overflow: hidden;
}

.hierarchy {
  width: 234px;
}

.scene {
  width: 712px;
}

.tabs {
  flex: none;
  height: 16px;
  display: flex;
  align-items: center;
  background: #a5a5a5;
  padding-right: 6px;
}

.tab {
  height: 16px;
  display: flex;
  align-items: center;
  gap: 3px;
  padding: 1px 7px 0 5px;
}

.tab .icon {
  width: 10px;
  height: 10px;
}

.tab.on {
  background: #c8c8c8;
  border-radius: 2px 2px 0 0;
}

.tabs .lock {
  width: 10px;
  height: 10px;
  margin-left: auto;
  margin-right: 5px;
}

.icon.dots {
  width: 9px;
  height: 9px;
}

.scene .tabs .dots {
  margin-left: auto;
}

.hierarchy .tab {
  width: 79px;
}

.scene-tab {
  width: 64px;
  padding-left: 7px;
  gap: 4px;
}

.game-tab {
  width: 64px;
  padding-left: 6px;
}

.bar {
  flex: none;
  height: 17px;
  display: flex;
  align-items: center;
  border-bottom: 1px solid #999;
  padding: 0 3px 0 5px;
}

.plus {
  width: 10px;
  height: 10px;
}

.plus + .caret {
  margin-left: 3px;
}

.search {
  flex: 1;
  height: 13px;
  display: flex;
  align-items: center;
  gap: 3px;
  padding-left: 3px;
  margin-left: 11px;
  background: #f0f0f0;
  border: 1px solid #aaa;
  border-radius: 3px;
  color: #858585;
  font-size: 9.500px;
}

.search .icon {
  width: 9px;
  height: 9px;
}

/* trees */
.tree {
  flex: 1;
  background: linear-gradient(90deg, #b3b3b3 26px, #c8c8c8 26px);
}

.node {
  display: flex;
  align-items: center;
  gap: 2px;
  height: 13.200px;
  padding-left: 49px;
  white-space: nowrap;
}

.node .icon {
  width: 12px;
  height: 12px;
}

.scene-node {
  background: #e4e4e4;
  padding: 0 6px 0 28px;
}

.scene-node .icon {
  width: 10px;
  height: 10px;
  margin: 0 3px 0 1px;
}

.scene-node .dots {
  margin: 0 0 0 auto;
  width: 9px;
  height: 9px;
}

.tree .picked {
  background: linear-gradient(90deg, #999 26px, #aeaeae 26px);
}

.fold {
  flex: none;
  border: 4px solid transparent;
  border-top: 6px solid #777;
  border-bottom: 0;
}

.fold.closed {
  border: 4px solid transparent;
  border-left: 6px solid #777;
  border-right: 0;
}

b {
  font-weight: 600;
}

/* scene toolbar */
.scene-bar {
  padding: 0 3px 0 3px;
}

.shade {
  width: 97px;
  display: flex;
  align-items: center;
  justify-content: space-between;
  padding-right: 4px;
}

.cell {
  flex: none;
  height: 16px;
  display: flex;
  align-items: center;
  justify-content: center;
  border-right: 1px solid #a0a0a0;
}

.cell.lit {
  background: #efefef;
}

.sep {
  width: 1px;
  height: 9px;
  background: #bbb;
}

.two-d {
  width: 22px;
  border-left: 1px solid #a0a0a0;
  margin: 0 5px 0 3px;
  font-size: 8.500px;
}

.bulb,
.audio,
.wrench {
  width: 21px;
}

.fx {
  width: 35px;
  justify-content: space-between;
  padding: 0 4px;
}

.hidden {
  width: 28px;
  gap: 2px;
}

.icon.eye {
  width: 12px;
  height: 10px;
}

.gridcell {
  width: 35px;
  justify-content: space-between;
  padding: 0 4px;
}

.wrench {
  margin-left: 156px;
  border-left: 1px solid #a0a0a0;
}

.camera {
  width: 29px;
  gap: 3px;
}

.gizmos {
  width: 58px;
  gap: 4px;
}

.scene-bar .search {
  margin-left: 5px;
  gap: 4px;
}

.viewport {
  display: block;
  flex: none;
}

.major {
  stroke: #868a87;
  stroke-width: .9;
  opacity: .5;
  fill: none;
}

.minor {
  stroke: #868a87;
  stroke-width: .7;
  opacity: .16;
  fill: none;
}

.gizmo-text {
  fill: #fff;
  font: bold 10px Inter, sans-serif;
}

.persp {
  fill: #b5b2af;
  font-size: 10.500px;
}

/* project */
.project {
  height: 231px;
  margin-top: 1px;
}

.project-tab {
  width: 67px;
}

.project-bar {
  padding-right: 0;
}

.project-bar .search {
  flex: none;
  width: 248px;
  margin: 0 3px 0 574px;
}

.project-bar .search .icon {
  width: 6px;
  height: 6px;
}

.project-bar .cell {
  width: 21px;
  border: 0;
  border-left: 1px solid #a5a5a5;
}

.fav .icon {
  color: #888;
}

.project-bar .count {
  width: 35px;
  gap: 1px;
}

.browser {
  flex: 1;
  display: flex;
}

.folders {
  width: 95px;
  overflow: hidden;
  border-right: 1px solid #999;
}

.folders .node {
  padding-left: 25px;
  gap: 3px;
}

.folders .icon {
  width: 11px;
  height: 11px;
}

.folders .root {
  padding-left: 3px;
  gap: 4px;
}

.folders .lens {
  color: #777;
}

.folders .picked {
  margin-top: 12px;
  background: #aeaeae;
}

.folders .gold {
  color: #d5a10a;
}

.files {
  flex: 1;
  display: flex;
  flex-direction: column;
}

.crumb {
  height: 17px;
  padding: 2px 4px;
  font-weight: 600;
  background: #cecece;
  border-bottom: 1px solid #b5b5b5;
}

.tiles {
  flex: 1;
  display: flex;
  align-items: flex-start;
  padding: 5px 0 0 10px;
  background: #bebebe;
}

.tile {
  width: 55px;
  height: 73px;
  padding-top: 5px;
  display: flex;
  flex-direction: column;
  align-items: center;
  font-size: 8.800px;
}

.tile span {
  line-height: 14px;
}

.tile:first-child {
  width: 55px;
  padding-left: 2px;
}

.tile.marked {
  width: 64px;
  border: 3px solid #ed1c24;
  padding: 2px 0 0 7px;
}

.thumb {
  width: 50px;
  height: 50px;
  margin-bottom: 1px;
}

.zoombar {
  height: 17px;
  display: flex;
  align-items: center;
  justify-content: flex-end;
  padding-right: 13px;
  background: #cecece;
  border-top: 1px solid #b0b0b0;
}

.track {
  width: 46px;
  height: 2px;
  display: flex;
  align-items: center;
  justify-content: center;
  padding-left: 6px;
  background: #808080;
}

.knob {
  width: 8px;
  height: 8px;
  border-radius: 50%;
  background: #555;
}

/* inspector */
.inspector {
  width: 240px;
  height: 584px;
}

.inspector .tab {
  width: 78px;
  border-top: 2px solid #3a72b0;
  padding: 0 7px;
  gap: 4px;
}

.object-head {
  flex: none;
  display: flex;
  height: 49px;
  padding: 6px 4px 0 5px;
}

.big-cube {
  flex: none;
  width: 27px;
  padding-top: 3px;
  display: flex;
  align-items: flex-end;
  height: 22px;
}

.big-cube .icon {
  width: 18px;
  height: 18px;
}

.big-cube .caret {
  margin-bottom: -1px;
  transform: scale(.8);
}

.head-rows {
  flex: 1;
}

.head-row {
  display: flex;
  align-items: center;
  height: 19px;
  padding-left: 5px;
}

.box {
  flex: none;
  width: 12px;
  height: 12px;
  display: flex;
  background: #f2f2f2;
  border: 1px solid #b8b8b8;
  border-radius: 2px;
}

.box .icon {
  width: 10px;
  height: 10px;
}

.box.none {
  visibility: hidden;
}

.field,
.select {
  display: flex;
  align-items: center;
  height: 15px;
  padding-left: 2px;
  border: 1px solid #b4b4b4;
  border-radius: 2px;
  background: #f0f0f0;
}

.select {
  justify-content: space-between;
  background: #dfdfdf;
  padding: 0 3px 1px 2px;
}

.name {
  flex: none;
  width: 127px;
  margin: 0 3px 0 5px;
  font-weight: 600;
}

.box.empty {
  margin-right: 2px;
}

.static {
  flex: none;
  width: 31px;
}

.second {
  padding-left: 2px;
}

.tag {
  flex: none;
  width: 22px;
}

.tag-sel {
  flex: none;
  width: 74px;
}

.layer {
  flex: none;
  margin: 0 0 0 11px;
  width: 29px;
}

.layer-sel {
  flex: none;
  width: 65px;
}

.component {
  flex: none;
  border-top: 1px solid #8c8c8c;
}

.component header {
  display: flex;
  align-items: center;
  height: 18px;
  padding: 0 6px 0 5px;
  background: #cbcbcb;
  border-bottom: 1px solid #bdbdbd;
  margin-bottom: 2px;
}

.component header b {
  flex: 1;
}

.component header > .icon {
  width: 10px;
  height: 10px;
  margin-left: 7px;
}

.component header > .type {
  width: 12px;
  height: 12px;
  margin: 0 4px 0 4px;
}

.component header .box {
  margin-right: 5px;
}

.row {
  display: flex;
  align-items: center;
  height: 16.400px;
  padding: 0 4px 0 16px;
}

.label {
  flex: none;
  width: 99px;
  overflow: hidden;
  white-space: nowrap;
}

.row.sub {
  padding-left: 27px;
}

.row.sub .label {
  width: 88px;
}

.row > .select,
.row > .ref {
  flex: 1;
}

.row-check.sub .label {
  width: 86px;
  margin-right: 2px;
}

.row-group {
  padding-left: 5px;
}

.row-group .fold {
  margin-right: 3px;
}

.row-group .closed {
  margin-right: 5px;
}

.row-group .label {
  width: auto;
  font-weight: 600;
}

.size {
  width: 39px;
  margin-left: auto;
}

.row-vector .label {
  width: 67px;
}

.axis {
  width: 52.500px;
  display: flex;
  align-items: center;
  justify-content: space-between;
}

.axis + .axis {
  padding-left: 4px;
}

.axis .field {
  width: 39px;
}

.row-vector .axis:nth-child(2) {
  width: 49px;
}

.ref em {
  display: flex;
  align-items: center;
  margin-left: auto;
  height: 13px;
  padding: 0 2px;
  background: #dedede;
}

.transform {
  height: 76px;
}

.filter {
  height: 44px;
}

.filter .row {
  margin-top: 3px;
}

.renderer {
  height: 174px;
}

.renderer header {
  margin-bottom: 3px;
}

.script {
  height: 46px;
  border: 3px solid #ed1c24;
  margin: 0 1px 0 1px;
}

.script header {
  height: 16px;
  padding: 0 2px 0 1px;
}

.script .row {
  padding: 2px 0 0 12px;
  color: #777;
}

.script .ref {
  background: #d6d6d6;
  border-color: #c0c0c0;
  color: #777;
}

.script .ref .icon {
  width: 9px;
  height: 9px;
  margin-right: 2px;
  opacity: .6;
}

.script .ref em {
  margin-right: 1px;
}

.add {
  width: 190px;
  height: 20px;
  margin: 6px 0 0 25px;
  flex: none;
  background: #e3e3e3;
  border: 1px solid #aaa;
  border-radius: 3px;
  font: inherit;
  color: inherit;
}

/* status bar */
.status {
  height: 19px;
  display: flex;
  justify-content: flex-end;
}

.status span {
  width: 22px;
  display: flex;
  align-items: center;
  justify-content: center;
  border-left: 1px solid #999;
}

.status .icon {
  width: 12px;
  height: 12px;
  color: #555;
}

.status .warn .icon {
  color: #efb208;
}
</style>
